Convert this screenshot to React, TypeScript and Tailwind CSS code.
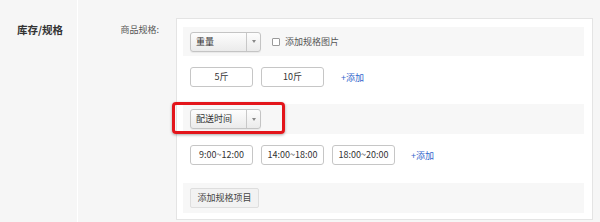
import React from "react";

const font = { fontFamily: '"Noto Sans CJK SC", "Noto Sans", sans-serif' };

function Select({ label }: { label: string }) {
  return (
    <div className="flex h-[20px] w-[71px] items-stretch rounded-[3px] border border-[#c4c4c4] bg-gradient-to-b from-[#fdfdfd] to-[#ebebeb] shadow-[0_1px_1px_rgba(0,0,0,0.06)]">
      <div className="flex flex-1 items-center pl-[5px] text-[9px] text-[#333]">{label}</div>
      <div className="flex w-[14px] items-center justify-center border-l border-[#c8c8c8]">
        <div className="h-0 w-0 border-x-[2px] border-t-[3px] border-x-transparent border-t-[#888]" />
      </div>
    </div>
  );
}

function Val({ v }: { v: string }) {
  return (
    <div className="flex h-[20px] w-[63px] items-center justify-center rounded-[3px] border border-[#c6c6c6] bg-white text-[9px] text-[#333]">
      {v}
    </div>
  );
}

export default function App() {
  return (
    <div className="relative flex h-[222px] w-[600px] bg-[#f6f6f6] text-[#333]" style={font}>
      <div className="w-[77px] pl-[17px] pt-[22px] text-[10.5px] font-bold text-[#333]">库存/规格</div>
      <div className="w-px bg-white" />
      <div className="w-[98px] pr-[17px] pt-[23px] text-right text-[9px] text-[#555]">商品规格:</div>
      <div className="mt-[18px] h-[202px] w-[417px] border border-[#e4e4e4] bg-white px-[6px] pt-[8px]">
        <div className="flex h-[29px] w-[401px] items-center gap-[11px] bg-[#f7f7f7] pl-[7px]">
          <Select label="重量" />
          <div className="flex items-center gap-[5px]">
            <div className="h-[8px] w-[8px] rounded-[1px] border border-[#9a9a9a] bg-white" />
            <span className="text-[9px] text-[#555]">添加规格图片</span>
          </div>
        </div>
        <div className="flex h-[48px] items-start gap-[8px] pl-[7px] pt-[11px]">
          <Val v="5斤" />
          <Val v="10斤" />
          <span className="ml-[9px] pt-[4px] text-[9px] text-[#3366cc]">+添加</span>
        </div>
        <div className="flex h-[30px] w-[401px] items-center bg-[#f7f7f7] pl-[7px]">
          <Select label="配送时间" />
        </div>
        <div className="flex h-[49px] items-start gap-[8px] pl-[7px] pt-[11px]">
          <Val v="9:00~12:00" />
          <Val v="14:00~18:00" />
          <Val v="18:00~20:00" />
          <span className="ml-[8px] pt-[4px] text-[9px] text-[#3366cc]">+添加</span>
        </div>
        <div className="flex h-[30px] w-[401px] items-center bg-[#f7f7f7] pl-[7px]">
          <div className="flex h-[20px] w-[69px] items-center justify-center rounded-[2px] border border-[#dedede] bg-[#f2f2f2] text-[9px] text-[#444]">
            添加规格项目
          </div>
        </div>
      </div>
      <div className="pointer-events-none absolute left-[172px] top-[102px] h-[32px] w-[113px] rounded-[4px] border-[3px] border-[#e3151b] shadow-[0_1px_3px_rgba(0,0,0,0.35)]" />
    </div>
  );
}
